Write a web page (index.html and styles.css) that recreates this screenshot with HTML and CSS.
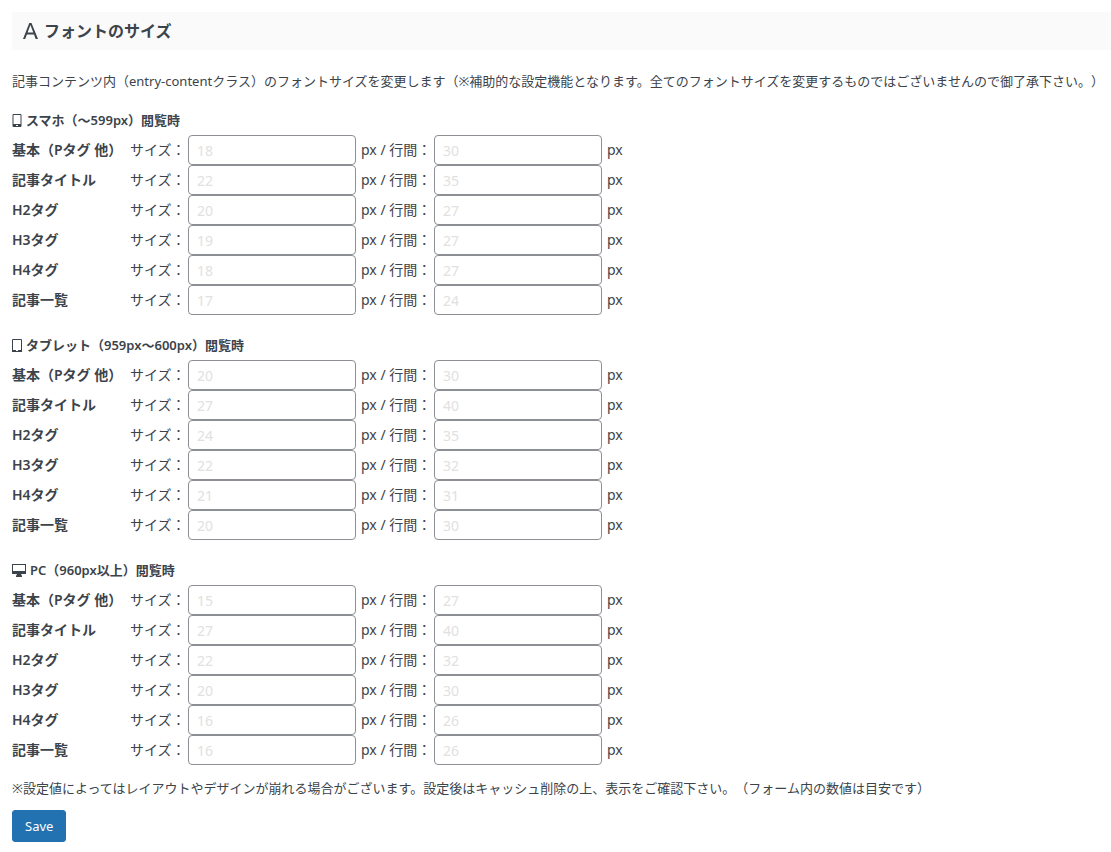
FILE: index.html
```html
<!DOCTYPE html>
<html lang="ja">

<head>
    <meta charset="UTF-8">
    <meta name="viewport" content="width=device-width, initial-scale=1.0">
    <title>フォントのサイズ</title>
    <link rel="stylesheet" href="styles.css">
</head>

<body>
    <h2 class="page-title">
        <svg class="icon-font" viewBox="0 0 15 17" aria-hidden="true"><path d="M0 16L6.3 0h2.2L15 16h-2.3l-1.7-4.6H3.9L2.2 16zM4.6 9.6h5.7L7.4 2z"/></svg>
        フォントのサイズ
    </h2>

    <p class="lead">記事コンテンツ内（entry-contentクラス）のフォントサイズを変更します（※補助的な設定機能となります。全てのフォントサイズを変更するものではございませんので御了承下さい。）</p>

    <form>
        <!-- スマホ -->
        <section class="device">
            <h3><svg class="icon-mobile" viewBox="0 0 10 13" aria-hidden="true"><path class="line" d="M1 .5h8v12H1z"/><path class="fill" d="M1 10h8v3H1z"/><path class="dot" d="M4 11h2v1H4z"/></svg>スマホ（～599px）閲覧時</h3>
            <div class="row"><b>基本（Pタグ 他）</b><label for="sp_p_size">サイズ：</label><input type="text" id="sp_p_size" placeholder="18"><label for="sp_p_line" class="line-label">px / 行間：</label><input type="text" id="sp_p_line" placeholder="30"><span class="unit">px</span></div>
            <div class="row"><b>記事タイトル</b><label for="sp_title_size">サイズ：</label><input type="text" id="sp_title_size" placeholder="22"><label for="sp_title_line" class="line-label">px / 行間：</label><input type="text" id="sp_title_line" placeholder="35"><span class="unit">px</span></div>
            <div class="row"><b>H2タグ</b><label for="sp_h2_size">サイズ：</label><input type="text" id="sp_h2_size" placeholder="20"><label for="sp_h2_line" class="line-label">px / 行間：</label><input type="text" id="sp_h2_line" placeholder="27"><span class="unit">px</span></div>
            <div class="row"><b>H3タグ</b><label for="sp_h3_size">サイズ：</label><input type="text" id="sp_h3_size" placeholder="19"><label for="sp_h3_line" class="line-label">px / 行間：</label><input type="text" id="sp_h3_line" placeholder="27"><span class="unit">px</span></div>
            <div class="row"><b>H4タグ</b><label for="sp_h4_size">サイズ：</label><input type="text" id="sp_h4_size" placeholder="18"><label for="sp_h4_line" class="line-label">px / 行間：</label><input type="text" id="sp_h4_line" placeholder="27"><span class="unit">px</span></div>
            <div class="row"><b>記事一覧</b><label for="sp_list_size">サイズ：</label><input type="text" id="sp_list_size" placeholder="17"><label for="sp_list_line" class="line-label">px / 行間：</label><input type="text" id="sp_list_line" placeholder="24"><span class="unit">px</span></div>
        </section>

        <!-- タブレット -->
        <section class="device">
            <h3><svg class="icon-mobile" viewBox="0 0 10 13" aria-hidden="true"><path class="line" d="M.5 .5h9v12h-9z"/><path class="fill" d="M0 11h10v2H0z"/><path class="dot" d="M4 11h2v1H4z"/></svg>タブレット（959px～600px）閲覧時</h3>
            <div class="row"><b>基本（Pタグ 他）</b><label for="tab_p_size">サイズ：</label><input type="text" id="tab_p_size" placeholder="20"><label for="tab_p_line" class="line-label">px / 行間：</label><input type="text" id="tab_p_line" placeholder="30"><span class="unit">px</span></div>
            <div class="row"><b>記事タイトル</b><label for="tab_title_size">サイズ：</label><input type="text" id="tab_title_size" placeholder="27"><label for="tab_title_line" class="line-label">px / 行間：</label><input type="text" id="tab_title_line" placeholder="40"><span class="unit">px</span></div>
            <div class="row"><b>H2タグ</b><label for="tab_h2_size">サイズ：</label><input type="text" id="tab_h2_size" placeholder="24"><label for="tab_h2_line" class="line-label">px / 行間：</label><input type="text" id="tab_h2_line" placeholder="35"><span class="unit">px</span></div>
            <div class="row"><b>H3タグ</b><label for="tab_h3_size">サイズ：</label><input type="text" id="tab_h3_size" placeholder="22"><label for="tab_h3_line" class="line-label">px / 行間：</label><input type="text" id="tab_h3_line" placeholder="32"><span class="unit">px</span></div>
            <div class="row"><b>H4タグ</b><label for="tab_h4_size">サイズ：</label><input type="text" id="tab_h4_size" placeholder="21"><label for="tab_h4_line" class="line-label">px / 行間：</label><input type="text" id="tab_h4_line" placeholder="31"><span class="unit">px</span></div>
            <div class="row"><b>記事一覧</b><label for="tab_list_size">サイズ：</label><input type="text" id="tab_list_size" placeholder="20"><label for="tab_list_line" class="line-label">px / 行間：</label><input type="text" id="tab_list_line" placeholder="30"><span class="unit">px</span></div>
        </section>

        <!-- PC -->
        <section class="device">
            <h3><svg class="icon-pc" viewBox="0 0 14 13" aria-hidden="true"><path class="fill" d="M0 0h14v10H9l1 2v1H4v-1l1-2H0zM1 1v6h12V1z" fill-rule="evenodd"/></svg>PC（960px以上）閲覧時</h3>
            <div class="row"><b>基本（Pタグ 他）</b><label for="pc_p_size">サイズ：</label><input type="text" id="pc_p_size" placeholder="15"><label for="pc_p_line" class="line-label">px / 行間：</label><input type="text" id="pc_p_line" placeholder="27"><span class="unit">px</span></div>
            <div class="row"><b>記事タイトル</b><label for="pc_title_size">サイズ：</label><input type="text" id="pc_title_size" placeholder="27"><label for="pc_title_line" class="line-label">px / 行間：</label><input type="text" id="pc_title_line" placeholder="40"><span class="unit">px</span></div>
            <div class="row"><b>H2タグ</b><label for="pc_h2_size">サイズ：</label><input type="text" id="pc_h2_size" placeholder="22"><label for="pc_h2_line" class="line-label">px / 行間：</label><input type="text" id="pc_h2_line" placeholder="32"><span class="unit">px</span></div>
            <div class="row"><b>H3タグ</b><label for="pc_h3_size">サイズ：</label><input type="text" id="pc_h3_size" placeholder="20"><label for="pc_h3_line" class="line-label">px / 行間：</label><input type="text" id="pc_h3_line" placeholder="30"><span class="unit">px</span></div>
            <div class="row"><b>H4タグ</b><label for="pc_h4_size">サイズ：</label><input type="text" id="pc_h4_size" placeholder="16"><label for="pc_h4_line" class="line-label">px / 行間：</label><input type="text" id="pc_h4_line" placeholder="26"><span class="unit">px</span></div>
            <div class="row"><b>記事一覧</b><label for="pc_list_size">サイズ：</label><input type="text" id="pc_list_size" placeholder="16"><label for="pc_list_line" class="line-label">px / 行間：</label><input type="text" id="pc_list_line" placeholder="26"><span class="unit">px</span></div>
        </section>

        <p class="note">※設定値によってはレイアウトやデザインが崩れる場合がございます。設定後はキャッシュ削除の上、表示をご確認下さい。（フォーム内の数値は目安です）</p>
        <button type="submit">Save</button>
    </form>
</body>

</html>
```
FILE: styles.css
```css
* {
    box-sizing: border-box;
}

body, h2, h3, p {
    margin: 0;
    padding: 0;
}

body {
    padding: 12px 0 10px 12px;
    font-family: "Noto Sans", "Noto Sans CJK JP", sans-serif;
    font-size: 13px;
    line-height: 20px;
    text-spacing-trim: space-all;
    background-color: #fff;
    color: #3c434a;
}

.page-title {
    display: flex;
    align-items: center;
    gap: 6px;
    padding: 9px 11px;
    background-color: #fafafa;
    font-size: 16px;
    line-height: 20px;
}

.lead {
    margin-top: 21px;
    white-space: nowrap;
}

.device {
    margin-top: 20px;
}

.device:first-of-type {
    margin-top: 19px;
}

.device h3 {
    display: flex;
    align-items: center;
    gap: 4px;
    margin-bottom: 4px;
    font-size: 13px;
    line-height: 21px;
    font-weight: 600;
}

.row {
    display: grid;
    grid-template-columns: 118px 58px 168px 78px 168px auto;
    align-items: center;
    font-size: 14px;
    line-height: 30px;
    white-space: nowrap;
}

.row b {
    font-weight: 600;
}

.line-label,
.unit {
    padding-left: 5px;
}

input {
    width: 100%;
    height: 30px;
    padding: 0 8px;
    border: 1px solid #8c8f94;
    border-radius: 4px;
    background-color: #fff;
    color: #2c3338;
    font-family: inherit;
    font-size: 14px;
}

input::placeholder {
    color: #e1e1e1;
}

.note {
    margin: 13px 0 12px;
}

button {
    display: block;
    height: 32px;
    padding: 0 12px;
    border: 1px solid #2271b1;
    border-radius: 3px;
    background-color: #2271b1;
    color: #fff;
    font-family: inherit;
    font-size: 13px;
    cursor: pointer;
}

button:hover {
    background-color: #135e96;
}

/* Icons */
.icon-font {
    width: 15px;
    height: 17px;
    fill: #3c434a;
    fill-rule: evenodd;
}

.icon-mobile {
    width: 10px;
    height: 13px;
}

.icon-pc {
    width: 14px;
    height: 13px;
}

.line {
    fill: none;
    stroke: #3c434a;
}

.fill {
    fill: #3c434a;
}

.dot {
    fill: #fff;
}
```
